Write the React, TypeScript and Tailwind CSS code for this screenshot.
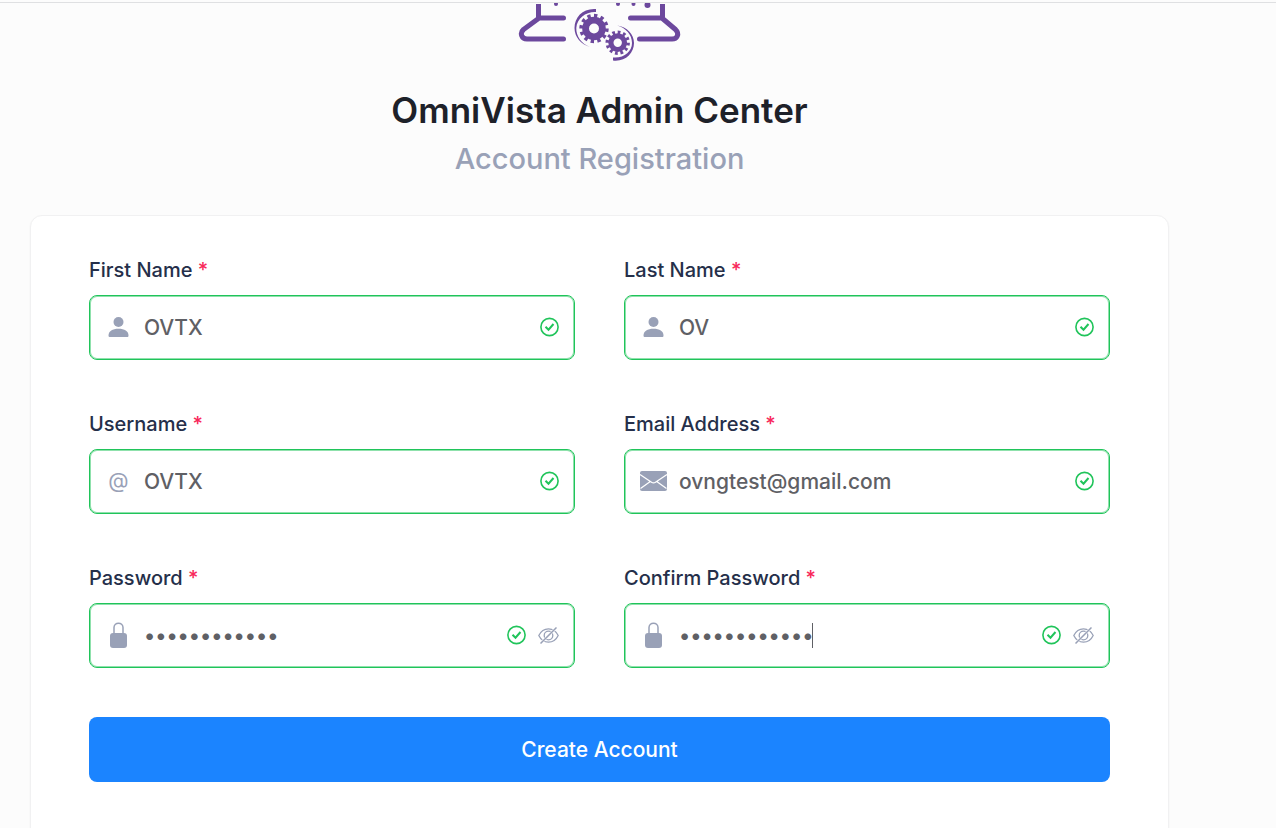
import { useState } from 'react';
import type { ReactNode } from 'react';

type FieldProps = {
  id: string;
  label: string;
  icon: ReactNode;
  initialValue: string;
  type?: string;
  active?: boolean;
};

function LogoIcon() {
  return (
    <svg viewBox="518 3 164 60" className="h-[60px] w-[164px] text-[#6c489d]" fill="none" stroke="currentColor" aria-hidden="true">
      <g strokeWidth="5" strokeLinecap="round" strokeLinejoin="round">
        <path d="M538.500 6.500V18H563.500M538.500 18.500L523.500 29.500C519.500 33 521.500 39 527 39H563.500" />
        <path d="M662.500 6.500V18H630.500M662.500 18.500L675.500 29.500C680 34 677 39 672 39H639.500" />
      </g>
      <g fill="currentColor" stroke="none">
        <path d="M536 4H541V8H536ZM660 4H665V8H660Z" />
        <circle cx="556" cy="4" r="2" />
        <circle cx="618" cy="4" r="2" />
        <circle cx="633.500" cy="4" r="2" />
        <circle cx="647.500" cy="5" r="3" />
        <path d="M596 9C583 8 574.500 17 574.500 28C574.500 37 581 44.500 590 47C581 43.500 576 36 576.300 28C577 18 586 11.500 596 12Z" />
        <path d="M617 25.500C627 27 634 34 634 43C634 53.500 625 62 613 60.500V57.500C624 58.500 632 51.500 632 43C632 34.500 626 28 617 25.500Z" />
      </g>
      <circle cx="594" cy="28.500" r="8.400" strokeWidth="6.800" />
      <circle cx="594" cy="28.500" r="12.700" strokeWidth="4" pathLength="24" strokeDasharray="1 1" />
      <circle cx="617.700" cy="42.700" r="6.800" strokeWidth="5.200" />
      <circle cx="617.700" cy="42.700" r="10.400" strokeWidth="3.600" pathLength="24" strokeDasharray="1 1" />
    </svg>
  );
}

function UserIcon() {
  return (
    <svg viewBox="0 0 21 20" className="h-5 w-[21px]" fill="currentColor" aria-hidden="true">
      <circle cx="10.500" cy="5" r="5" />
      <path d="M0.500 18.500C0.500 14 4.500 11.700 10.500 11.700S20.500 14 20.500 18.500C20.500 19.500 20 20 19 20H2C1 20 0.500 19.500 0.500 18.500Z" />
    </svg>
  );
}

function MailIcon() {
  return (
    <svg viewBox="0 0 27 20" className="h-5 w-[27px]" aria-hidden="true">
      <rect width="27" height="20" rx="2" fill="currentColor" />
      <path d="M0 3.500L11.500 11.300Q13.500 12.600 15.500 11.300L27 3.500M0.500 17.500L10.300 10.500M26.500 17.500L16.700 10.500" fill="none" stroke="white" strokeWidth="1.300" />
    </svg>
  );
}

function LockIcon() {
  return (
    <svg viewBox="0 0 17 26" className="h-[26px] w-[17px]" aria-hidden="true">
      <path d="M4 12V5.500C4 -0.300 13 -0.300 13 5.500V12" fill="none" stroke="currentColor" strokeWidth="1.500" />
      <rect y="11" width="17" height="15" rx="3" fill="currentColor" />
    </svg>
  );
}

function CheckIcon() {
  return (
    <svg viewBox="0 0 19 19" className="h-5 w-[19px] shrink-0 text-[#20c45a]" fill="none" stroke="currentColor" aria-hidden="true">
      <circle cx="9.500" cy="9.500" r="8.600" strokeWidth="1.600" />
      <path d="M5.500 9.200L8.500 12.200L13.500 6.500" strokeWidth="2" />
    </svg>
  );
}

function EyeOffIcon() {
  return (
    <svg viewBox="0 0 21 17" className="h-[17px] w-[21px]" fill="none" stroke="currentColor" strokeWidth="1.300" aria-hidden="true">
      <path d="M0.800 8.500C3 4 6.500 1.800 10.500 1.800S18 4 20.200 8.500C18 13 14.500 15.200 10.500 15.200S3 13 0.800 8.500Z" />
      <circle cx="10.500" cy="8.500" r="4.300" />
      <path d="M2.500 16.500L18.500 0.500" stroke="white" strokeWidth="2.600" />
      <path d="M2.500 16.500L18.500 0.500" strokeWidth="1.500" />
    </svg>
  );
}

function Field({ id, label, icon, initialValue, type = 'text', active = false }: FieldProps) {
  const [value, setValue] = useState(initialValue);
  const [visible, setVisible] = useState(false);
  const isPassword = type === 'password';

  return (
    <div className="flex min-w-0 flex-col gap-2.5">
      <label htmlFor={id} className="text-[20px] leading-[30px] font-medium text-[#252f4a]">
        {label} <span className="text-[#f8285a]">*</span>
      </label>
      <div className="flex h-[65px] items-center gap-3 rounded-lg border border-[#20c45a] px-[15px] pb-px inset-ring inset-ring-[#20c45a]/50">
        <span className="flex w-[27px] shrink-0 justify-center text-[#99a1b7]">{icon}</span>
        <div className="relative min-w-0 flex-1">
          <input
            id={id}
            type={isPassword && visible ? 'text' : type}
            value={value}
            onChange={(event) => setValue(event.target.value)}
            className="block w-full bg-transparent pt-0.5 text-[21px] leading-[30px] font-medium text-[#5f6065] outline-none"
          />
          {active && <span className="absolute top-1 left-[133px] h-[25px] w-px bg-[#5f6065]" />}
        </div>
        <CheckIcon />
        {isPassword && (
          <button
            type="button"
            aria-label="Toggle password visibility"
            onClick={() => setVisible(!visible)}
            className="shrink-0 text-[#99a1b7]"
          >
            <EyeOffIcon />
          </button>
        )}
      </div>
    </div>
  );
}

export default function App() {
  return (
    <div className="min-h-screen bg-[#fcfcfc] pt-0.5 font-['Inter',sans-serif]">
      <main className="border-t border-[#dfe0e2] pr-[107px] pl-[30px]">
        <header className="flex flex-col items-center">
          <LogoIcon />
          <h1 className="mt-6 text-[35px] leading-[46px] font-semibold text-[#1e2129]">OmniVista Admin Center</h1>
          <p className="mt-1 text-[29px] leading-[44px] font-medium text-[#99a1b7]">Account Registration</p>
        </header>
        <form
          onSubmit={(event) => event.preventDefault()}
          className="mt-[34px] rounded-xl border border-[#f1f1f2] bg-white px-[58px] pt-[39px] pb-[58px] shadow-xs"
        >
          <div className="grid grid-cols-2 gap-[49px]">
            <Field id="first-name" label="First Name" icon={<UserIcon />} initialValue="OVTX" />
            <Field id="last-name" label="Last Name" icon={<UserIcon />} initialValue="OV" />
            <Field id="username" label="Username" icon={<span className="text-[21px]">@</span>} initialValue="OVTX" />
            <Field id="email" label="Email Address" icon={<MailIcon />} initialValue="ovngtest@gmail.com" type="email" />
            <Field id="password" label="Password" icon={<LockIcon />} initialValue="administrate" type="password" />
            <Field id="confirm-password" label="Confirm Password" icon={<LockIcon />} initialValue="administrate" type="password" active />
          </div>
          <button
            type="submit"
            className="mt-[49px] h-[65px] w-full rounded-lg bg-[#1b84ff] text-[21px] font-medium text-white"
          >
            Create Account
          </button>
        </form>
      </main>
    </div>
  );
}
